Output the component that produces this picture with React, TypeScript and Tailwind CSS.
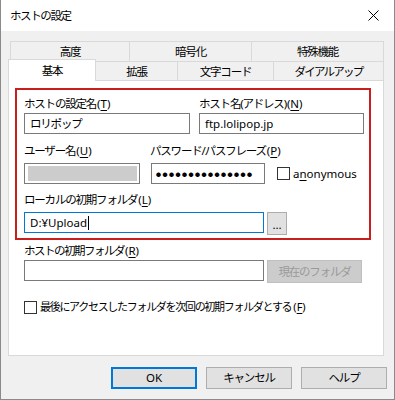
import React from 'react'

const topTabs = [
  { label: '高度', w: 'w-[119px]' },
  { label: '暗号化', w: 'w-[122px]' },
  { label: '特殊機能', w: 'w-[133px] border-r' },
]

const bottomTabs = [
  { label: '拡張', w: 'w-[82px]' },
  { label: '文字コード', w: 'w-[96px]' },
  { label: 'ダイアルアップ', w: 'w-[110px] tracking-[-1.8px]' },
]

function Label({ text, keyChar, className = '' }: { text: string; keyChar: string; className?: string }) {
  return (
    <div className={`h-[16px] leading-[16px] whitespace-nowrap ${className}`}>
      {text}
      <span className="tracking-normal ml-[1px]">
        (<u className="underline-offset-2">{keyChar}</u>)
      </span>
    </div>
  )
}

function CheckBox() {
  return <span className="w-[13px] h-[13px] shrink-0 border border-[#333333] bg-white" />
}

function Button({ label, primary = false }: { label: string; primary?: boolean }) {
  return (
    <div
      className={`w-[86px] h-[22px] flex items-center justify-center bg-[#e1e1e1] ${
        primary ? 'border-2 border-[#0078d7]' : 'border border-[#adadad]'
      }`}
    >
      {label}
    </div>
  )
}

export default function App() {
  return (
    <div className="w-[395px] h-[400px] bg-[#f0f0f0] border-x border-b border-[#8a8a8a] flex flex-col text-[11.5px] tracking-[-1.2px] text-black font-['Noto_Sans','Noto_Sans_CJK_JP',sans-serif]">
      {/* Title bar */}
      <div className="h-[31px] shrink-0 bg-white flex items-center justify-between pl-[9px] pr-[10px]">
        <span className="tracking-[-1.4px]">ホストの設定</span>
        <svg width="11" height="11" viewBox="0 0 11 11" className="mr-[5px]">
          <path d="M0.5 0.5 L10.5 10.5 M10.5 0.5 L0.5 10.5" stroke="#000" strokeWidth="1" fill="none" />
        </svg>
      </div>

      <div className="flex-1 flex flex-col px-[7px] pt-[10px]">
        {/* Tabs */}
        <div className="ml-[2px] w-[374px]">
          <div className="flex h-[20px]">
            {topTabs.map((t) => (
              <div key={t.label} className={`${t.w} h-full border-t border-l border-[#d9d9d9] flex items-center justify-center`}>
                {t.label}
              </div>
            ))}
          </div>
          <div className="flex items-end h-[19px]">
            <div className="relative z-10 -ml-[2px] -mb-px w-[88px] h-[22px] bg-white border-t border-x border-[#d9d9d9] flex items-center justify-center">
              基本
            </div>
            {bottomTabs.map((t) => (
              <div key={t.label} className={`${t.w} h-full pt-[2px] border-t border-r border-[#d9d9d9] flex items-center justify-center`}>
                {t.label}
              </div>
            ))}
          </div>
        </div>

        {/* Panel */}
        <div className="w-[376px] h-[276px] shrink-0 border border-[#d9d9d9] bg-white flex flex-col">
          <div className="ml-[6px] mt-[7px] w-[356px] h-[152px] border-2 border-[#c81e1e] pl-[7px] flex flex-col">
            {/* Row 1 */}
            <div className="mt-[6px] flex gap-[9px]">
              <div className="w-[166px] flex flex-col">
                <Label text="ホストの設定名" keyChar="T" />
                <div className="mt-[1px] h-[21px] border border-[#7a7a7a] bg-white px-[5px] flex items-center">ロリポップ</div>
              </div>
              <div className="w-[165px] flex flex-col">
                <Label text="ホスト名(アドレス)" keyChar="N" />
                <div className="mt-[1px] h-[21px] border border-[#7a7a7a] bg-white px-[5px] flex items-center tracking-normal">
                  ftp.lolipop.jp
                </div>
              </div>
            </div>

            {/* Row 2 */}
            <div className="mt-[9px] flex gap-[11px]">
              <div className="w-[116px] flex flex-col">
                <Label text="ユーザー名" keyChar="U" />
                <div className="mt-[4px] h-[21px] border border-[#7a7a7a] bg-white flex">
                  <div className="flex-1 ml-[3px] mr-[2px] my-[2px] bg-[#cccccc]" />
                </div>
              </div>
              <div className="flex flex-col">
                <Label text="パスワード/パスフレーズ" keyChar="P" className="-ml-[1px]" />
                <div className="mt-[4px] flex items-center">
                  <div className="w-[114px] h-[21px] border border-[#7a7a7a] bg-white pl-[4px] flex items-center">
                    <span className="whitespace-nowrap text-[5px] tracking-[1.5px] leading-none font-['Noto_Sans_CJK_JP',sans-serif]">
                      ●●●●●●●●●●●●●●●
                    </span>
                  </div>
                  <div className="ml-[12px] flex items-center gap-[3px] tracking-normal">
                    <CheckBox />
                    <span>
                      a<u className="underline-offset-2">n</u>onymous
                    </span>
                  </div>
                </div>
              </div>
            </div>

            {/* Row 3 */}
            <Label text="ローカルの初期フォルダ" keyChar="L" className="mt-[8px]" />
            <div className="mt-[4px] flex items-start gap-[3px] tracking-normal">
              <div className="w-[240px] h-[21px] border border-[#0078d7] bg-white px-[5px] flex items-center">
                D:¥Upload
                <span className="ml-px w-px h-[14px] bg-black" />
              </div>
              <div className="w-[20px] h-[23px] border border-[#adadad] bg-[#e1e1e1] flex items-end justify-center pb-[4px] leading-none">
                ...
              </div>
            </div>
          </div>

          <div className="pl-[15px] flex flex-col">
            <Label text="ホストの初期フォルダ" keyChar="R" className="mt-[3px] tracking-[-1.5px]" />
            <div className="mt-[1px] flex items-start gap-[3px]">
              <div className="w-[240px] h-[21px] border border-[#7a7a7a] bg-white" />
              <div className="w-[95px] h-[23px] border border-[#bfbfbf] bg-[#cccccc] text-[#9a9a9a] flex items-center justify-center">
                現在のフォルダ
              </div>
            </div>
            <div className="mt-[16px] h-[16px] flex items-center gap-[3px]">
              <CheckBox />
              <span className="whitespace-nowrap text-[11px] tracking-[-1.3px]">
                最後にアクセスしたフォルダを次回の初期フォルダとする
                <span className="tracking-normal ml-[2px]">
                  (<u className="underline-offset-2">F</u>)
                </span>
              </span>
            </div>
          </div>
        </div>

        {/* Buttons */}
        <div className="mt-[11px] flex justify-end gap-[9px] tracking-normal">
          <Button label="OK" primary />
          <div className="tracking-[-1.2px]">
            <Button label="キャンセル" />
          </div>
          <div className="tracking-[-1.2px]">
            <Button label="ヘルプ" />
          </div>
        </div>
      </div>
    </div>
  )
}
